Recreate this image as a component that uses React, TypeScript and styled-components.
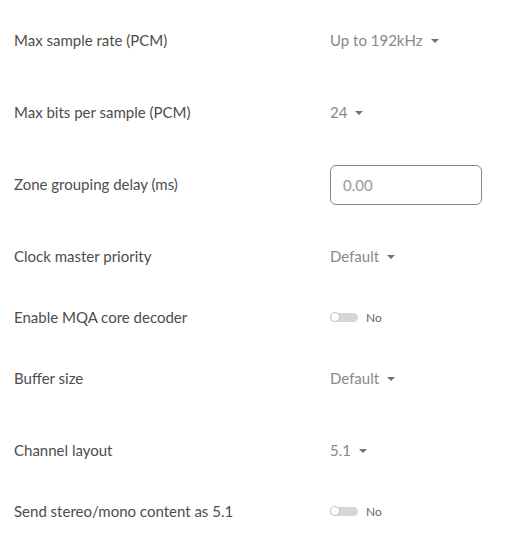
import styled, { createGlobalStyle } from "styled-components";

const GlobalStyle = createGlobalStyle`
  body {
    margin: 0;
    background: #fff;
    font-family: Lato, "Liberation Sans", sans-serif;
  }
`;

const StyledList = styled.div`
  display: flex;
  flex-direction: column;
  padding-top: 4px;
`;

const StyledRow = styled.div<{ $compact?: boolean }>`
  display: grid;
  grid-template-columns: 316px 1fr;
  align-items: center;
  height: ${({ $compact }) => ($compact ? 50 : 72)}px;
  padding-left: 14px;
`;

const StyledLabel = styled.span`
  font-size: 15px;
  color: #4d4d4d;
`;

const StyledSelect = styled.div`
  display: flex;
  align-items: center;
  gap: 8px;
  font-size: 15px;
  color: #888;
`;

const StyledCaret = styled.span`
  width: 0;
  height: 0;
  border-left: 4px solid transparent;
  border-right: 4px solid transparent;
  border-top: 4px solid #707070;
  margin-top: 2px;
`;

const StyledInput = styled.input`
  box-sizing: border-box;
  width: 152px;
  height: 40px;
  margin-top: 1px;
  border: 1px solid #888;
  border-radius: 6px;
  padding: 0 12px;
  font-family: inherit;
  font-size: 15px;
  color: #333;
  outline: none;

  &::placeholder {
    color: #999;
  }
`;

const StyledToggle = styled.div`
  display: flex;
  align-items: center;
  gap: 8px;
  font-size: 12px;
  color: #666;
`;

const StyledTrack = styled.span`
  position: relative;
  width: 28px;
  height: 9px;
  border-radius: 5px;
  background: #d6d6d6;
`;

const StyledKnob = styled.span`
  position: absolute;
  left: 0;
  top: -0.5px;
  box-sizing: border-box;
  width: 10px;
  height: 10px;
  border-radius: 50%;
  background: #fff;
  border: 1px solid #c4c4c4;
`;

const Select = ({ value }: { value: string }) => (
  <StyledSelect>
    {value}
    <StyledCaret />
  </StyledSelect>
);

const Toggle = () => (
  <StyledToggle>
    <StyledTrack>
      <StyledKnob />
    </StyledTrack>
    No
  </StyledToggle>
);

export default function App() {
  return (
    <>
      <GlobalStyle />
      <StyledList>
        <StyledRow>
          <StyledLabel>Max sample rate (PCM)</StyledLabel>
          <Select value="Up to 192kHz" />
        </StyledRow>
        <StyledRow>
          <StyledLabel>Max bits per sample (PCM)</StyledLabel>
          <Select value="24" />
        </StyledRow>
        <StyledRow>
          <StyledLabel>Zone grouping delay (ms)</StyledLabel>
          <div>
            <StyledInput placeholder="0.00" />
          </div>
        </StyledRow>
        <StyledRow>
          <StyledLabel>Clock master priority</StyledLabel>
          <Select value="Default" />
        </StyledRow>
        <StyledRow $compact>
          <StyledLabel>Enable MQA core decoder</StyledLabel>
          <Toggle />
        </StyledRow>
        <StyledRow>
          <StyledLabel>Buffer size</StyledLabel>
          <Select value="Default" />
        </StyledRow>
        <StyledRow>
          <StyledLabel>Channel layout</StyledLabel>
          <Select value="5.1" />
        </StyledRow>
        <StyledRow $compact>
          <StyledLabel>Send stereo/mono content as 5.1</StyledLabel>
          <Toggle />
        </StyledRow>
      </StyledList>
    </>
  );
}
